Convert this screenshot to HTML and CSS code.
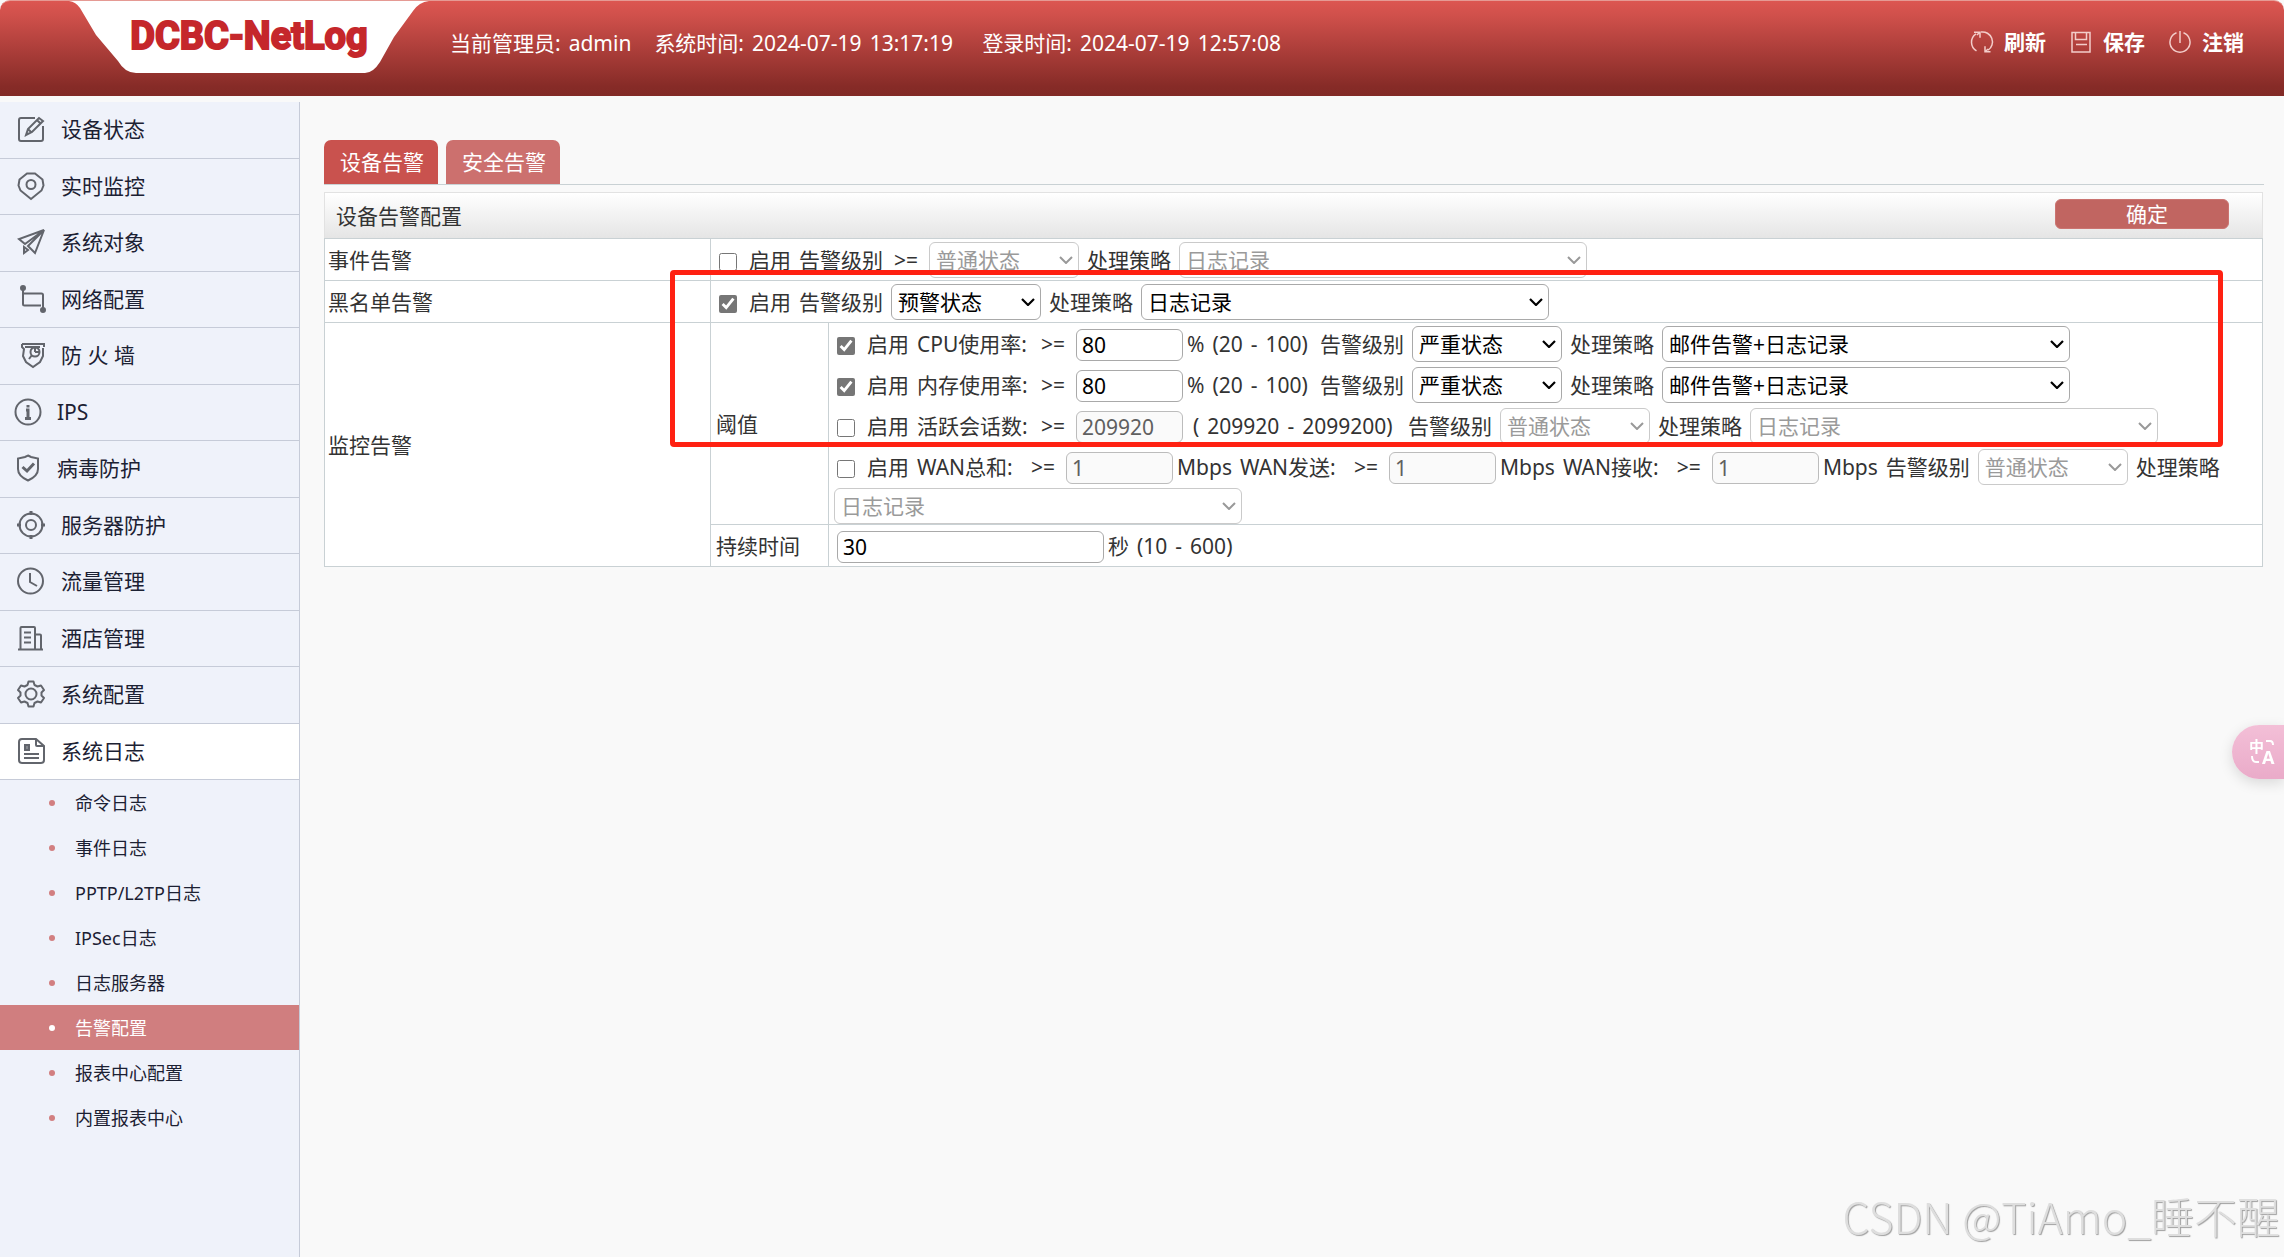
FILE: index.html
```html
<!DOCTYPE html>
<html lang="zh-CN">
<head>
<meta charset="utf-8">
<title>DCBC-NetLog</title>
<link rel="stylesheet" href="styles.css">
</head>
<body>
<header class="topbar">
  <a class="brand" href="#">DCBC-NetLog</a>
  <div class="session">
    <div class="fact admin"><span>当前管理员:</span><span>admin</span></div>
    <div class="fact"><span>系统时间:</span><span>2024-07-19</span><span>13:17:19</span></div>
    <div class="fact"><span>登录时间:</span><span>2024-07-19</span><span>12:57:08</span></div>
  </div>
  <nav class="actions">
    <a href="#"><svg viewBox="0 0 22 22"><path d="M5 2.800A10 10 0 0 0 5.500 19.800M17 19.200A10 10 0 0 0 10 1M3 1.200h6v5.600M19.500 20.800h-5.500v-5.500M8.500 1.500 6 4M14.500 20.500l2.500-2.500"/></svg>刷新</a>
    <a href="#"><svg viewBox="0 0 22 22"><path d="M2 1.500h18v19.500H2zM5.500 1.500v7h11v-7M6 13.500h11"/></svg>保存</a>
    <a href="#"><svg viewBox="0 0 22 22"><path d="M7.500 1.800a10 10 0 1 0 7 0M11 0v12"/></svg>注销</a>
  </nav>
</header>

<div class="shell">
  <aside class="sidebar">
    <nav class="menu">
      <a href="#"><svg viewBox="0 0 28 28"><path d="M18 3H4a2 2 0 0 0-2 2v19a2 2 0 0 0 2 2h20a2 2 0 0 0 2-2V11M9 20l2-6L22 3l4 3-11 11zM20 5l3 3M11 14l3 3"/></svg>设备状态</a>
      <a href="#"><svg viewBox="0 0 28 28"><path d="M10 1.500h8l7.500 6 1 6-2 5L14 27 3.500 18.500l-2-5 1-6z"/><circle cx="14" cy="12.500" r="4.500"/></svg>实时监控</a>
      <a href="#"><svg viewBox="0 0 28 28"><path d="M27 2 2 11l6 5zM27 2 11 18l7 7zM8 16 27 2M7 19v6l4-3z"/></svg>系统对象</a>
      <a href="#"><svg viewBox="0 0 28 28"><path d="M6 4v15q0 1.500 1.500 1.500H24M6 8.500h18.500q1.500 0 1.500 1.500v15"/><circle cx="6" cy="3" r="2" fill="#62656c"/><circle cx="26" cy="25" r="2" fill="#62656c"/></svg>网络配置</a>
      <a href="#"><svg viewBox="0 0 28 28"><path d="M5 3h22v3M5 3v3l2 2-1 7 3 6 7 5 7-5 3-6V7M8 6h15M12 18l3-4"/><circle cx="18" cy="11" r="4.500"/><path d="M18 11V7M18 11h4"/></svg>防 火 墙</a>
      <a href="#" class="tight"><svg viewBox="0 0 28 28"><circle cx="14" cy="14" r="12.500"/><path stroke-width="3" d="M14 7v2.500M12 12h2v8.500M11 20.500h6"/></svg>IPS</a>
      <a href="#" class="tight"><svg viewBox="0 0 28 28"><path d="M14 1.500 17 3l7 1.500V15q0 7-10 11.500Q4 22 4 15V4.500L11 3z"/><path stroke-width="3" d="m8.500 13 4.500 4 7-7.500"/></svg>病毒防护</a>
      <a href="#"><svg viewBox="0 0 28 28"><circle cx="14" cy="14" r="11.500"/><circle cx="14" cy="14" r="5"/><path stroke-width="3" d="M14 0v4M14 24v4M0 14h4M24 14h4"/></svg>服务器防护</a>
      <a href="#"><svg viewBox="0 0 28 28"><circle cx="13.500" cy="14" r="12.500"/><path d="M13 6v9l7 4"/></svg>流量管理</a>
      <a href="#"><svg viewBox="0 0 28 28"><path d="M1 25.500h25M3.500 25.500V4q0-1 1-1H17q1 0 1 1v21.500M18 10.500h5q1 0 1 1v14M7 8.500h7M7 13.500h7M7 18.500h7"/></svg>酒店管理</a>
      <a href="#"><svg viewBox="0 0 28 28"><path stroke-linejoin="round" d="M11.500 1.500h5l1 3.500 3 1.500 3.500-1 3 4.500-2.500 2.500v3l2.500 2.500-3 4.500-3.500-1-3 1.500-1 3.500h-5l-1-3.500-3-1.500-3.500 1L1 18l2.500-2.500v-3L1 10l3-4.500 3.500 1 3-1.500z"/><circle cx="14" cy="14" r="5.500"/></svg>系统配置</a>
      <a href="#" class="open"><svg viewBox="0 0 28 28"><path d="M19 2H5a3 3 0 0 0-3 3v18a3 3 0 0 0 3 3h19a3 3 0 0 0 3-3V9zM19 2v6q0 1 1 1h7M7 17h15M7 21h15"/><path fill="#85888e" d="M8 8h4v5H8z"/></svg>系统日志</a>
    </nav>
    <nav class="submenu">
      <a href="#">命令日志</a>
      <a href="#">事件日志</a>
      <a href="#">PPTP/L2TP日志</a>
      <a href="#">IPSec日志</a>
      <a href="#">日志服务器</a>
      <a href="#" class="current">告警配置</a>
      <a href="#">报表中心配置</a>
      <a href="#">内置报表中心</a>
    </nav>
  </aside>

  <main class="content">
    <nav class="tabs">
      <a href="#" class="current">设备告警</a>
      <a href="#">安全告警</a>
    </nav>
    <form class="panel">
      <div class="panel-head">
        <h1>设备告警配置</h1>
        <button type="button">确定</button>
      </div>
      <table>
        <colgroup><col class="col-name"><col class="col-sub"><col></colgroup>
        <tr>
          <th>事件告警</th>
          <td colspan="2">
            <div class="line">
              <label class="tick"><input type="checkbox">启用</label>
              <label for="ev-level">告警级别</label><span class="op">&gt;=</span>
              <select id="ev-level" disabled><option>普通状态</option></select>
              <label for="ev-act">处理策略</label>
              <select id="ev-act" class="wide" disabled><option>日志记录</option></select>
            </div>
          </td>
        </tr>
        <tr>
          <th>黑名单告警</th>
          <td colspan="2">
            <div class="line">
              <label class="tick"><input type="checkbox" checked>启用</label>
              <label for="bl-level">告警级别</label>
              <select id="bl-level"><option>预警状态</option></select>
              <label for="bl-act">处理策略</label>
              <select id="bl-act" class="wide"><option>日志记录</option></select>
            </div>
          </td>
        </tr>
        <tr>
          <th rowspan="2">监控告警</th>
          <th class="sub">阈值</th>
          <td class="thresholds">
            <div class="line">
              <label class="tick"><input type="checkbox" checked>启用</label>
              <label for="cpu" class="metric">CPU使用率:</label><span class="op">&gt;=</span>
              <span class="field"><input id="cpu" type="text" value="80"><span class="range percent"><span>%</span><span>(20</span><span>-</span><span>100)</span></span></span>
              <label for="cpu-level">告警级别</label>
              <select id="cpu-level"><option>严重状态</option></select>
              <label for="cpu-act">处理策略</label>
              <select id="cpu-act" class="wide"><option>邮件告警+日志记录</option></select>
            </div>
            <div class="line">
              <label class="tick"><input type="checkbox" checked>启用</label>
              <label for="mem" class="metric">内存使用率:</label><span class="op">&gt;=</span>
              <span class="field"><input id="mem" type="text" value="80"><span class="range percent"><span>%</span><span>(20</span><span>-</span><span>100)</span></span></span>
              <label for="mem-level">告警级别</label>
              <select id="mem-level"><option>严重状态</option></select>
              <label for="mem-act">处理策略</label>
              <select id="mem-act" class="wide"><option>邮件告警+日志记录</option></select>
            </div>
            <div class="line">
              <label class="tick"><input type="checkbox">启用</label>
              <label for="ses" class="metric">活跃会话数:</label><span class="op">&gt;=</span>
              <span class="field"><input id="ses" type="text" value="209920" disabled><span class="range sessions"><span>(</span><span>209920</span><span>-</span><span>2099200)</span></span></span>
              <label for="ses-level">告警级别</label>
              <select id="ses-level" disabled><option>普通状态</option></select>
              <label for="ses-act">处理策略</label>
              <select id="ses-act" class="wide" disabled><option>日志记录</option></select>
            </div>
            <div class="line">
              <label class="tick"><input type="checkbox">启用</label>
              <label for="wan" class="wan">WAN总和:</label><span class="op">&gt;=</span>
              <span class="field"><input id="wan" type="text" value="1" disabled>Mbps</span>
              <label for="wan-tx" class="wan">WAN发送:</label><span class="op">&gt;=</span>
              <span class="field"><input id="wan-tx" type="text" value="1" disabled>Mbps</span>
              <label for="wan-rx" class="wan">WAN接收:</label><span class="op">&gt;=</span>
              <span class="field"><input id="wan-rx" type="text" value="1" disabled>Mbps</span>
              <label for="wan-level">告警级别</label>
              <select id="wan-level" disabled><option>普通状态</option></select>
              <label for="wan-act">处理策略</label>
              <select id="wan-act" class="wide" disabled><option>日志记录</option></select>
            </div>
          </td>
        </tr>
        <tr>
          <th class="sub"><label for="hold">持续时间</label></th>
          <td>
            <div class="line hold">
              <span class="field"><input id="hold" class="long" type="text" value="30"><span class="range"><span>秒</span><span>(10</span><span>-</span><span>600)</span></span></span>
            </div>
          </td>
        </tr>
      </table>
      <div class="highlight"></div>
    </form>
  </main>
</div>

<button type="button" class="translate" aria-label="翻译">
  <svg viewBox="0 0 28 28"><text x="0" y="14" font-size="15">中</text><text x="13" y="26" font-size="18">A</text><path d="M17 3h4q3 0 3 4M3 18q0 6 4 6h3"/></svg>
</button>
<div class="watermark">CSDN @TiAmo_睡不醒</div>
</body>
</html>
```
FILE: styles.css
```css
* { box-sizing: border-box; }

body {
  margin: 0;
  min-height: 100vh;
  display: flex;
  flex-direction: column;
  background: #f9f9f9;
  color: #333;
  font: 21px/28px "Noto Sans", "Noto Sans CJK SC", sans-serif;
}

a { color: inherit; text-decoration: none; }

svg { fill: none; stroke: currentColor; overflow: visible; }

/* Top bar */
.topbar {
  display: flex;
  align-items: flex-start;
  height: 96px;
  padding: 0 40px 0 69px;
  border-top: 1px solid #e59a94;
  border-radius: 10px 10px 0 0;
  background: linear-gradient(#dc5651, #d0504b 15%, #862b27 90%, #822a26);
  color: #fff;
}

.brand {
  width: 360px;
  height: 72px;
  background: url("data:image/svg+xml,%3Csvg xmlns='http://www.w3.org/2000/svg' viewBox='0 0 360 72'%3E%3Cpath fill='white' d='M0 0Q7 1 11 7L27 34 49 60Q56 72 67 72H296Q304 72 311 61L325 36 344 10Q350 1 360 0z'/%3E%3C/svg%3E") 0 0 / 100% 100% no-repeat;
  color: #c5272b;
  font: 700 38px/70px Roboto, sans-serif;
  -webkit-text-stroke: 2px #c5272b;
  text-align: center;
}

.session { display: flex; gap: 23px; margin: 28px 0 0 21px; }
.fact { display: flex; gap: 8px; min-width: 305px; }
.admin { min-width: 181px; }

.actions { display: flex; gap: 24px; margin: 27px 0 0 auto; font-weight: 700; }
.actions a { display: flex; align-items: center; gap: 11px; }
.actions svg { width: 22px; height: 22px; stroke: #f3cdca; stroke-width: 1.5; }

/* Side menu */
.shell { display: flex; flex: 1; }

.sidebar {
  width: 300px;
  margin-top: 6px;
  border-right: 1px solid #c6cbd8;
  background: #eff2fa;
  color: #1c2133;
}

.menu { display: grid; grid-template-rows: repeat(12, 1fr); height: 678px; }
.menu a {
  display: flex;
  align-items: center;
  gap: 16px;
  padding: 0 0 1px 17px;
  border-bottom: 1px solid #c6cbd8;
}
.menu svg { width: 28px; height: 28px; color: #62656c; stroke-width: 2; }
.menu .tight { gap: 15px; padding-left: 14px; }
.menu .open { background: #fff; }

.submenu { font-size: 18px; }
.submenu a { display: flex; align-items: center; gap: 20px; height: 45px; padding-left: 49px; }
.submenu a::before { content: ""; width: 6px; height: 6px; border-radius: 50%; background: #d27f80; }
.submenu .current { background: #d07e7f; color: #fff; }
.submenu .current::before { background: #fff; }

/* Content */
.content { flex: 1; min-width: 0; padding: 44px 20px 0 24px; }

.tabs { display: flex; gap: 8px; border-bottom: 1px solid #c9d1d4; }
.tabs a {
  padding: 8px 14px 8px 16px;
  border-radius: 7px 7px 0 0;
  background: #cc706e;
  color: #fff;
}
.tabs .current { background: #c9524e; }

.panel { position: relative; margin: 7px 1px 0 0; }

.panel-head {
  display: flex;
  justify-content: space-between;
  height: 46px;
  padding: 6px 33px 0 11px;
  border: 1px solid #e2e2e2;
  border-bottom: 0;
  background: linear-gradient(#fff, #e5e5e5);
}
.panel-head h1 { margin: 3px 0 0; font-size: 21px; line-height: 28px; font-weight: 400; }
.panel-head button {
  width: 174px;
  height: 30px;
  padding: 0 0 0 10px;
  border: 1px solid #cb7471;
  border-radius: 6px;
  background: #c16561;
  color: #fff;
  font: inherit;
  line-height: 26px;
}

table { width: 100%; table-layout: fixed; border-collapse: collapse; background: #fff; }
.col-name { width: 386px; }
.col-sub { width: 118px; }
th, td { height: 42px; padding: 3px 4px 2px 3px; border: 1px solid #c9d1d4; }
th { font-weight: 400; text-align: left; }
th.sub { padding-left: 5px; }
td { padding-left: 5px; }
td.thresholds { padding-bottom: 0; }

.line { display: flex; flex-wrap: wrap; align-items: center; gap: 3px 8px; }
.line + .line { margin-top: 5px; }
.hold { padding-left: 3px; }

.tick { display: flex; align-items: center; gap: 12px; padding-left: 3px; }
.tick input { width: 18px; height: 18px; margin: 3px 0 0; accent-color: #767676; }

.metric { width: 113px; }
.wan { width: 103px; }
.op { width: 30px; text-align: center; }
.field { display: flex; align-items: center; gap: 4px; }
.range { display: flex; gap: 8px; }
.percent { width: 125px; }
.sessions { width: 213px; padding-left: 6px; }

input[type="text"], select {
  border: 1px solid #a9a9a9;
  border-radius: 6px;
  background-color: #fff;
  color: #000;
  font: inherit;
}
input[type="text"] { width: 107px; height: 32px; margin: 2px 0 0; padding: 0 5px; }
input.long { width: 267px; }
input[type="text"]:disabled { border-color: #bcbcbc; background: #fafafa; color: #606060; }

select {
  width: 150px;
  height: 36px;
  padding: 0 6px;
  appearance: none;
  background: #fff url("data:image/svg+xml,%3Csvg xmlns='http://www.w3.org/2000/svg' viewBox='0 0 14 8'%3E%3Cpath fill='none' stroke='black' stroke-width='2.200' d='M1 1l6 6 6-6'/%3E%3C/svg%3E") right 5px center / 14px 8px no-repeat;
}
select.wide { width: 408px; }
select:disabled {
  border-color: #cacaca;
  color: #9a9a9a;
  opacity: 1;
  background-image: url("data:image/svg+xml,%3Csvg xmlns='http://www.w3.org/2000/svg' viewBox='0 0 14 8'%3E%3Cpath fill='none' stroke='%23999' stroke-width='2' d='M1 1l6 6 6-6'/%3E%3C/svg%3E");
}

/* Marker frame drawn over the threshold rows */
.highlight {
  position: absolute;
  top: 78px;
  left: 346px;
  right: 40px;
  height: 177px;
  border: 5px solid #ff2112;
  border-radius: 4px;
  pointer-events: none;
}

.translate {
  position: fixed;
  top: 725px;
  right: 0;
  width: 52px;
  height: 54px;
  padding: 0 0 0 17px;
  border: 0;
  border-radius: 27px 0 0 27px;
  background: linear-gradient(#f3bfd7, #eaabc9);
  box-shadow: 0 4px 14px #0002;
  color: #fff;
}
.translate svg { display: block; width: 28px; height: 28px; stroke-width: 2; }
.translate text { fill: #fff; stroke: none; font-family: "Noto Sans", "Noto Sans CJK SC", sans-serif; font-weight: 700; }

.watermark {
  position: fixed;
  right: 4px;
  bottom: 10px;
  color: #dedede;
  font: 300 43px/64px "Noto Sans CJK SC", sans-serif;
  text-shadow: 1px 1px 1px #a0a0a0;
}
```
